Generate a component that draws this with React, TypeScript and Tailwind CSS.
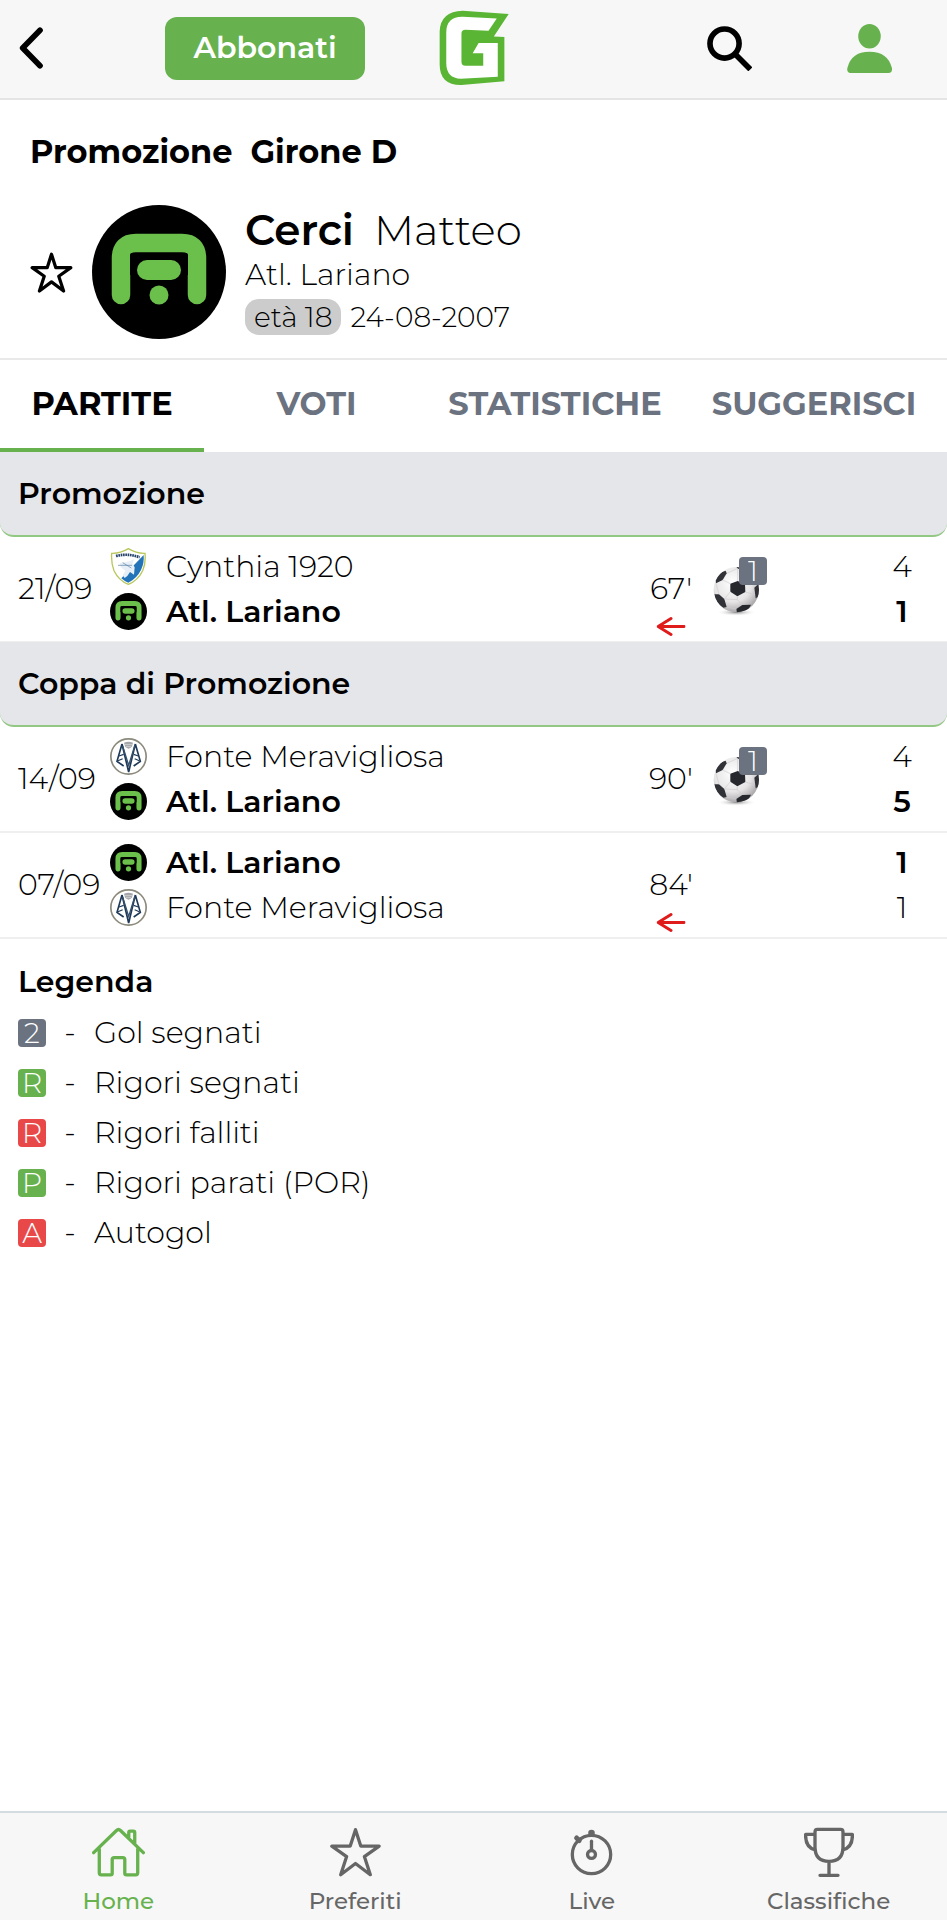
import React from "react";

type Side = { team: string; crest: "lariano" | "cynthia" | "fonte"; score: number; own?: boolean };
type Match = { date: string; minute: string; off?: boolean; goals?: number; sides: Side[] };

const competitions: { name: string; matches: Match[] }[] = [
  {
    name: "Promozione",
    matches: [
      {
        date: "21/09",
        minute: "67'",
        off: true,
        goals: 1,
        sides: [
          { team: "Cynthia 1920", crest: "cynthia", score: 4 },
          { team: "Atl. Lariano", crest: "lariano", score: 1, own: true },
        ],
      },
    ],
  },
  {
    name: "Coppa di Promozione",
    matches: [
      {
        date: "14/09",
        minute: "90'",
        goals: 1,
        sides: [
          { team: "Fonte Meravigliosa", crest: "fonte", score: 4 },
          { team: "Atl. Lariano", crest: "lariano", score: 5, own: true },
        ],
      },
      {
        date: "07/09",
        minute: "84'",
        off: true,
        sides: [
          { team: "Atl. Lariano", crest: "lariano", score: 1, own: true },
          { team: "Fonte Meravigliosa", crest: "fonte", score: 1 },
        ],
      },
    ],
  },
];

const legend = [
  { mark: "2", label: "Gol segnati", tone: "bg-[#6b7280]" },
  { mark: "R", label: "Rigori segnati", tone: "bg-[#67b24e]" },
  { mark: "R", label: "Rigori falliti", tone: "bg-[#e94848]" },
  { mark: "P", label: "Rigori parati (POR)", tone: "bg-[#67b24e]" },
  { mark: "A", label: "Autogol", tone: "bg-[#e94848]" },
];

function LarianoCrest({ className }: { className: string }) {
  return (
    <svg viewBox="0 0 134 134" className={className} aria-hidden="true">
      <circle cx="67" cy="67" r="67" fill="#000" />
      <path d="M29 90V53q0-15 15-15h46q15 0 15 15v37" fill="none" stroke="#6bbf4b" strokeWidth="18.5" strokeLinecap="round" />
      <path d="M38 70V50q0-2 2-2h54q2 0 2 2v20z" fill="#000" />
      <rect x="45" y="55" width="44" height="20" rx="10" fill="#6bbf4b" />
      <circle cx="67" cy="90" r="9.5" fill="#6bbf4b" />
    </svg>
  );
}

function CynthiaCrest({ className }: { className: string }) {
  return (
    <svg viewBox="0 0 111 111" className={className} aria-hidden="true">
      <path d="M55 2Q80 17 105 16Q108 45 98 68Q84 97 55 109Q26 97 12 68Q3 45 5 16Q30 17 55 2z" fill="#fff" stroke="#b9c65a" strokeWidth="4" />
      <path d="M101 21Q103 45 93 66Q80 92 55 104Q42 99 34 91z" fill="#2273b8" />
      <path d="M30 45l28-5 14-6-4 14 6 10-2 22-12-8-8 12-8 6-6-8 8-14-14-10z" fill="#e6eff7" />
      <path d="M18 24q37-9 71 4" fill="none" stroke="#26436b" strokeWidth="8" strokeDasharray="5 2" />
      <path d="M24 52h42M38 44l26 16" fill="none" stroke="#5b7fa3" strokeWidth="2" />
    </svg>
  );
}

function FonteCrest({ className }: { className: string }) {
  return (
    <svg viewBox="0 0 111 111" className={className} aria-hidden="true">
      <circle cx="55.5" cy="55.5" r="53" fill="#fff" stroke="#8c8a7c" strokeWidth="5" />
      <path d="M42 14q13-5 27 0l-3 11q-3 6-10 7-8-1-11-7z" fill="#a4a6aa" />
      <path d="M44 20h23M47 26h17" stroke="#e4e4e4" strokeWidth="2" />
      <g fill="none" stroke="#1f3a58" strokeWidth="5">
        <path d="M36 18L21 70l20 14M36 18l20 84 20-84M76 18l15 52-20 14" />
        <path d="M38 24l18 58 18-58" stroke="#34506d" strokeWidth="4" />
        <path d="M27 54l14-5M85 54l-14-5M24 68l14-6M88 68l-14-6" strokeWidth="3.500" />
      </g>
    </svg>
  );
}

const crests = { lariano: LarianoCrest, cynthia: CynthiaCrest, fonte: FonteCrest };

function Ball() {
  return (
    <svg viewBox="0 0 144 156" className="h-13 w-12" aria-hidden="true">
      <defs>
        <radialGradient id="leather" cx="42%" cy="35%" r="65%">
          <stop offset="0" stopColor="#ffffff" />
          <stop offset="0.65" stopColor="#e6e4e5" />
          <stop offset="1" stopColor="#aaa8aa" />
        </radialGradient>
        <radialGradient id="shade">
          <stop offset="0" stopColor="#8a8a8a" />
          <stop offset="1" stopColor="#fff" stopOpacity="0" />
        </radialGradient>
        <clipPath id="round">
          <circle cx="70" cy="74" r="68" />
        </clipPath>
      </defs>
      <ellipse cx="70" cy="142" rx="60" ry="11" fill="url(#shade)" />
      <circle cx="70" cy="74" r="68" fill="url(#leather)" />
      <g clipPath="url(#round)">
        <path d="M52 56l22-8 22 10 1 23-24 13-21-14z" fill="#26282d" />
        <path d="M8 46q6-24 30-29l3 8-12 20-20 10z" fill="#303238" />
        <path d="M4 88l14 0 16 14 7 24-10 2Q8 115 4 88z" fill="#303238" />
        <path d="M70 132l18-12 26-1q-8 23-42 25z" fill="#26282d" />
        <path d="M124 68l18-16v40l-14 8z" fill="#303238" />
        <path d="M70 0h34l12 14-18 6-26-10z" fill="#303238" />
        <path d="M29 45l23 11M52 80l-18 22M73 94v10l15 16M97 81l28 8M96 58l14-20M74 48V10M41 25l33-15M18 88L9 55M41 126l29 6M73 104l-39-2" fill="none" stroke="#cfcdcf" strokeWidth="2" />
      </g>
    </svg>
  );
}

function Logo() {
  return (
    <svg viewBox="40 30 212 230" className="h-19 w-[70px]" role="img" aria-label="G">
      <path d="M112 32L251 42 206 110 238 112V246L108 257Q42 258 42 195V95Q44 34 112 32z" fill="#5ab534" />
      <path d="M215 56L112 50Q62 49 62 98V192Q63 237 106 238L218 232V130H160L142 161H174V199H120Q108 199 108 187V101Q108 90 120 90L190 93z" fill="#fff" />
    </svg>
  );
}

function StarIcon({ className, width }: { className: string; width: number }) {
  return (
    <svg viewBox="0 0 160 152" className={className} fill="none" stroke="currentColor" strokeWidth={width} strokeLinejoin="round" aria-hidden="true">
      <path d="M80 8L96 58H152L107 90 125 145 80 111 35 145 53 90 8 58H64z" />
    </svg>
  );
}

function HomeIcon() {
  return (
    <svg viewBox="0 0 160 150" className="h-[50px] w-[53px]" fill="none" stroke="currentColor" strokeWidth="10" strokeLinecap="round" strokeLinejoin="round" aria-hidden="true">
      <path d="M5 77L74 10q6-6 12 0l69 67M22 66v72q0 6 6 6h28q5 0 5-5V98q0-6 6-6h26q6 0 6 6v41q0 5 5 5h28q6 0 6-6V66M111 30V16q0-4 4-4h10q4 0 4 4v32" />
    </svg>
  );
}

function WatchIcon() {
  return (
    <svg viewBox="0 0 130 140" className="h-[47px] w-[43px]" fill="none" stroke="currentColor" strokeWidth="10" strokeLinecap="round" aria-hidden="true">
      <circle cx="65" cy="76" r="58" />
      <circle cx="65" cy="76" r="12" />
      <path d="M65 63V36" />
      <circle cx="65" cy="11" r="5" fill="currentColor" />
      <path d="M20 26l8 8" strokeWidth="15" />
    </svg>
  );
}

function CupIcon() {
  return (
    <svg viewBox="0 0 150 150" className="size-[50px]" fill="none" stroke="currentColor" strokeWidth="10" strokeLinecap="round" strokeLinejoin="round" aria-hidden="true">
      <path d="M33 15q0-8 7-8h70q7 0 7 8v45q0 43-42 43T33 60zM33 22H5q-2 39 29 47M117 22h28q2 39-29 47M75 103v41M48 145h54" />
    </svg>
  );
}

const nav = [
  { label: "Home", icon: <HomeIcon />, tone: "text-[#67b24e]" },
  { label: "Preferiti", icon: <StarIcon className="h-[50px] w-[53px]" width={10} />, tone: "text-[#666666]" },
  { label: "Live", icon: <WatchIcon />, tone: "text-[#666666]" },
  { label: "Classifiche", icon: <CupIcon />, tone: "text-[#666666]" },
];

const tabs = ["PARTITE", "VOTI", "STATISTICHE", "SUGGERISCI"];

function MatchRow({ match }: { match: Match }) {
  return (
    <li className="grid grid-cols-[92px_1fr_80px_156px_70px] items-center border-b-2 border-[#efefef] py-[7px] pr-[10px] pl-[18px]">
      <span className="font-light">{match.date}</span>
      <div>
        {match.sides.map((side) => {
          const Crest = crests[side.crest];
          return (
            <div key={side.team} className="flex h-[45px] items-center gap-[19px]">
              <Crest className="size-[37px]" />
              <span className={side.own ? "font-semibold" : "font-light"}>{side.team}</span>
            </div>
          );
        })}
      </div>
      <div className="relative text-center font-light">
        {match.minute}
        {match.off && (
          <svg viewBox="0 0 88 56" className="absolute top-full left-1/2 mt-2.5 h-[19px] w-[29px] -translate-x-1/2" fill="none" stroke="#e01b1b" strokeWidth="9" strokeLinecap="round" strokeLinejoin="round" aria-label="Sostituito">
            <path d="M84 28H6M44 4L5 28l39 24" />
          </svg>
        )}
      </div>
      <div className="flex">
        {match.goals && (
          <div className="relative mt-1 ml-0.5">
            <Ball />
            <span className="absolute -top-2 left-[26px] flex size-7 items-center justify-center rounded bg-[#6b7280] text-[28px] leading-7 font-light text-white">
              {match.goals}
            </span>
          </div>
        )}
      </div>
      <div className="text-center">
        {match.sides.map((side) => (
          <div key={side.team} className={side.own ? "h-[45px] leading-[45px] font-semibold" : "h-[45px] leading-[45px] font-light"}>
            {side.score}
          </div>
        ))}
      </div>
    </li>
  );
}

export default function App() {
  return (
    <div className="flex min-h-screen flex-col bg-white font-['Montserrat','Inter',sans-serif] text-[30px] leading-9 text-black">
      <header className="grid h-[100px] grid-cols-[1fr_auto_1fr] items-center border-b-2 border-[#e5e5e5] bg-[#f7f7f7] pb-0.5">
        <div className="flex items-center pl-[19px]">
          <button type="button" aria-label="Indietro">
            <svg viewBox="0 0 76 126" className="h-[42px] w-[26px]" fill="none" stroke="#000" strokeWidth="17" strokeLinecap="round" strokeLinejoin="round">
              <path d="M62 10L10 63l52 53" />
            </svg>
          </button>
          <button type="button" className="ml-[120px] h-[63px] w-[200px] rounded-xl bg-[#67b24e] font-semibold text-white">
            Abbonati
          </button>
        </div>
        <Logo />
        <div className="flex items-center justify-end gap-[95px] pr-[55px]">
          <button type="button" aria-label="Cerca">
            <svg viewBox="0 0 136 136" className="size-[45px]" fill="none" stroke="#000">
              <circle cx="53" cy="53" r="44" strokeWidth="17" />
              <path d="M84 84l47 47" strokeWidth="17" />
            </svg>
          </button>
          <button type="button" aria-label="Profilo">
            <svg viewBox="0 0 136 148" className="h-[49px] w-[45px]" fill="#67b24e">
              <ellipse cx="68" cy="37" rx="34" ry="37" />
              <path d="M68 84Q124 84 136 134Q137 148 125 148H11Q-1 148 1 134Q12 84 68 84z" />
            </svg>
          </button>
        </div>
      </header>

      <main className="flex-1">
        <section className="border-b-2 border-[#e9e9e9] px-[30px] pt-[34px] pb-[19px]">
          <h2 className="flex gap-[18px] text-[32px] font-bold">
            <span>Promozione</span>
            <span>Girone D</span>
          </h2>
          <div className="mt-[35px] flex items-center">
            <button type="button" aria-label="Aggiungi ai preferiti">
              <StarIcon className="size-[43px]" width={12} />
            </button>
            <LarianoCrest className="ml-[19px] size-[134px]" />
            <div className="ml-[19px] pb-1">
              <h1 className="flex gap-5 text-[42px] leading-[50px]">
                <span className="font-semibold">Cerci</span>
                <span className="font-light">Matteo</span>
              </h1>
              <p className="leading-10 font-light">Atl. Lariano</p>
              <p className="mt-1 flex items-center gap-[9px] text-[28px] font-light">
                <span className="rounded-[14px] bg-[#cccccc] px-[9px]">età 18</span>
                <span>24-08-2007</span>
              </p>
            </div>
          </div>
        </section>

        <div role="tablist" className="grid grid-cols-[204fr_225fr_252fr_266fr] text-[32px] font-bold">
          {tabs.map((tab, i) => (
            <button
              key={tab}
              type="button"
              role="tab"
              aria-selected={i === 0}
              className={
                i === 0
                  ? "h-[92px] border-b-4 border-[#67b24e] text-black"
                  : "h-[92px] border-b-4 border-transparent text-[#6b7280]"
              }
            >
              {tab}
            </button>
          ))}
        </div>

        {competitions.map((competition) => (
          <section key={competition.name} className="-mb-px">
            <h3 className="flex h-[85px] items-center rounded-b-[14px] border-b-2 border-[#93c784] bg-[#e5e6ea] px-[18px] font-semibold">
              {competition.name}
            </h3>
            <ul>
              {competition.matches.map((match) => (
                <MatchRow key={match.date} match={match} />
              ))}
            </ul>
          </section>
        ))}

        <section className="px-[18px] pt-[26px]">
          <h3 className="font-semibold">Legenda</h3>
          <ul className="mt-2">
            {legend.map((item) => (
              <li key={item.label} className="flex h-[50px] items-center font-light">
                <span className={`flex size-7 items-center justify-center rounded text-[28px] leading-7 text-white ${item.tone}`}>{item.mark}</span>
                <span className="w-12 text-center">-</span>
                <span>{item.label}</span>
              </li>
            ))}
          </ul>
        </section>
      </main>

      <nav className="sticky bottom-0 grid h-[109px] grid-cols-4 border-t-2 border-[#d3dce1] bg-[#f7f7f7]">
        {nav.map((item) => (
          <a key={item.label} href="#" className={`flex flex-col items-center pt-[13px] text-[23px] leading-[30px] font-medium ${item.tone}`}>
            <span className="flex h-[52px] items-center">{item.icon}</span>
            <span className="mt-2">{item.label}</span>
          </a>
        ))}
      </nav>
    </div>
  );
}
